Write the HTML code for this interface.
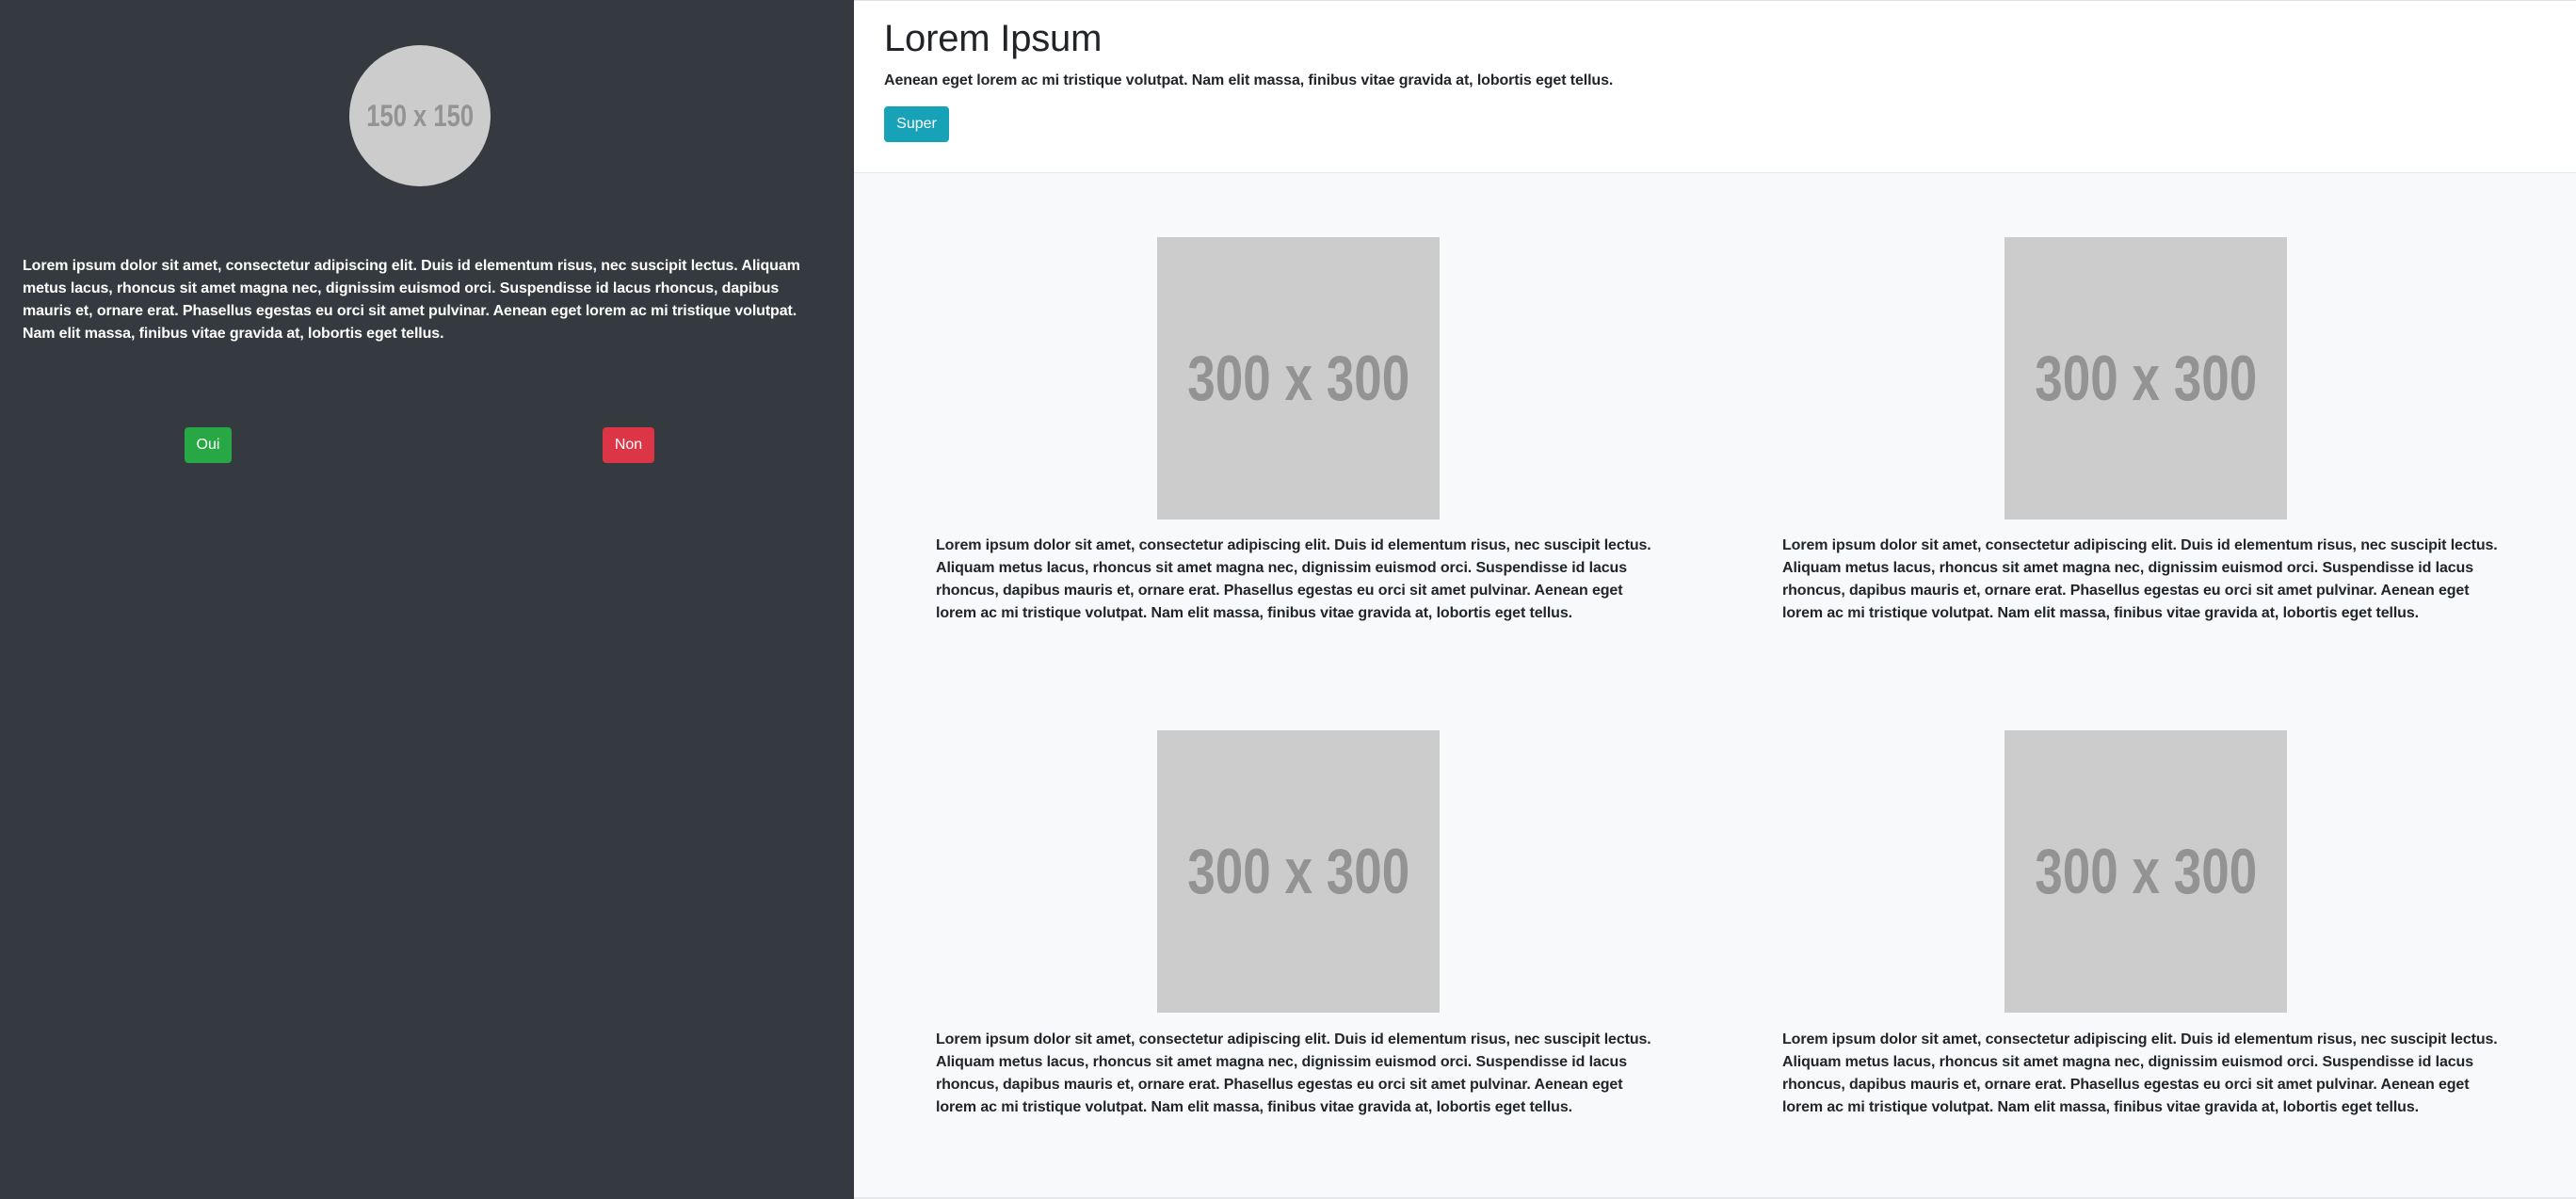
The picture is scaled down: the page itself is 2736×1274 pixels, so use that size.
<!DOCTYPE html>
<html><head><meta charset="utf-8"><style>
*{margin:0;padding:0;box-sizing:border-box}
body{width:2736px;height:1274px;position:relative;overflow:hidden;font-family:"Liberation Sans",Arial,sans-serif;background:#f8f9fa}
.side{position:absolute;left:0;top:0;width:907px;height:1274px;background:#343a40}
.circ{position:absolute;left:371px;top:48px;width:150px;height:150px;border-radius:50%;background:#cccccc;display:flex;align-items:center;justify-content:center}
.ph{color:#939393;font-weight:bold;white-space:nowrap;display:inline-block}
.stext{position:absolute;left:24px;top:271px;width:840px;color:#fff;font-weight:bold;font-size:16px;line-height:24px;letter-spacing:-0.11px}
.btn{position:absolute;height:38px;color:#fff;font-size:16px;line-height:38px;text-align:center;border-radius:4px}
.header{position:absolute;left:907px;top:0;width:1829px;height:184px;background:#fff;border-top:1px solid #dee2e6;border-bottom:1px solid #e5e7ea}
h1{position:absolute;left:32px;top:16px;font-size:40px;font-weight:400;color:#212529;line-height:48px;letter-spacing:-0.2px}
.sub{position:absolute;left:32px;top:73px;font-size:16px;font-weight:bold;color:#212529;line-height:24px;letter-spacing:-0.11px}
.img{position:absolute;width:300px;height:300px;background:#cccccc;display:flex;align-items:center;justify-content:center}
.ctext{position:absolute;width:765px;font-size:16px;font-weight:bold;color:#212529;line-height:24px;letter-spacing:-0.11px}
.bline{position:absolute;left:907px;top:1272px;width:1829px;height:2px;background:#e5e7ea}
</style></head><body>
<div class="side">
<div class="circ"><span class="ph" style="font-size:32px;transform:scaleX(0.8)">150 x 150</span></div>
<div class="stext">Lorem ipsum dolor sit amet, consectetur adipiscing elit. Duis id elementum risus, nec suscipit lectus. Aliquam metus lacus, rhoncus sit amet magna nec, dignissim euismod orci. Suspendisse id lacus rhoncus, dapibus mauris et, ornare erat. Phasellus egestas eu orci sit amet pulvinar. Aenean eget lorem ac mi tristique volutpat. Nam elit massa, finibus vitae gravida at, lobortis eget tellus.</div>
<div class="btn" style="left:196px;top:454px;width:50px;background:#28a745">Oui</div>
<div class="btn" style="left:640px;top:454px;width:55px;background:#dc3545">Non</div>
</div>
<div class="header">
<h1>Lorem Ipsum</h1>
<div class="sub">Aenean eget lorem ac mi tristique volutpat. Nam elit massa, finibus vitae gravida at, lobortis eget tellus.</div>
<div class="btn" style="left:32px;top:112px;width:69px;background:#17a2b8">Super</div>
</div>

<div class="img" style="left:1229px;top:252px"><span class="ph" style="font-size:68px;transform:scaleX(0.78)">300 x 300</span></div>
<div class="ctext" style="left:994px;top:568px">Lorem ipsum dolor sit amet, consectetur adipiscing elit. Duis id elementum risus, nec suscipit lectus. Aliquam metus lacus, rhoncus sit amet magna nec, dignissim euismod orci. Suspendisse id lacus rhoncus, dapibus mauris et, ornare erat. Phasellus egestas eu orci sit amet pulvinar. Aenean eget lorem ac mi tristique volutpat. Nam elit massa, finibus vitae gravida at, lobortis eget tellus.</div>
<div class="img" style="left:2129px;top:252px"><span class="ph" style="font-size:68px;transform:scaleX(0.78)">300 x 300</span></div>
<div class="ctext" style="left:1893px;top:568px">Lorem ipsum dolor sit amet, consectetur adipiscing elit. Duis id elementum risus, nec suscipit lectus. Aliquam metus lacus, rhoncus sit amet magna nec, dignissim euismod orci. Suspendisse id lacus rhoncus, dapibus mauris et, ornare erat. Phasellus egestas eu orci sit amet pulvinar. Aenean eget lorem ac mi tristique volutpat. Nam elit massa, finibus vitae gravida at, lobortis eget tellus.</div>
<div class="img" style="left:1229px;top:776px"><span class="ph" style="font-size:68px;transform:scaleX(0.78)">300 x 300</span></div>
<div class="ctext" style="left:994px;top:1093px">Lorem ipsum dolor sit amet, consectetur adipiscing elit. Duis id elementum risus, nec suscipit lectus. Aliquam metus lacus, rhoncus sit amet magna nec, dignissim euismod orci. Suspendisse id lacus rhoncus, dapibus mauris et, ornare erat. Phasellus egestas eu orci sit amet pulvinar. Aenean eget lorem ac mi tristique volutpat. Nam elit massa, finibus vitae gravida at, lobortis eget tellus.</div>
<div class="img" style="left:2129px;top:776px"><span class="ph" style="font-size:68px;transform:scaleX(0.78)">300 x 300</span></div>
<div class="ctext" style="left:1893px;top:1093px">Lorem ipsum dolor sit amet, consectetur adipiscing elit. Duis id elementum risus, nec suscipit lectus. Aliquam metus lacus, rhoncus sit amet magna nec, dignissim euismod orci. Suspendisse id lacus rhoncus, dapibus mauris et, ornare erat. Phasellus egestas eu orci sit amet pulvinar. Aenean eget lorem ac mi tristique volutpat. Nam elit massa, finibus vitae gravida at, lobortis eget tellus.</div>
<div class="bline"></div>
</body></html>
